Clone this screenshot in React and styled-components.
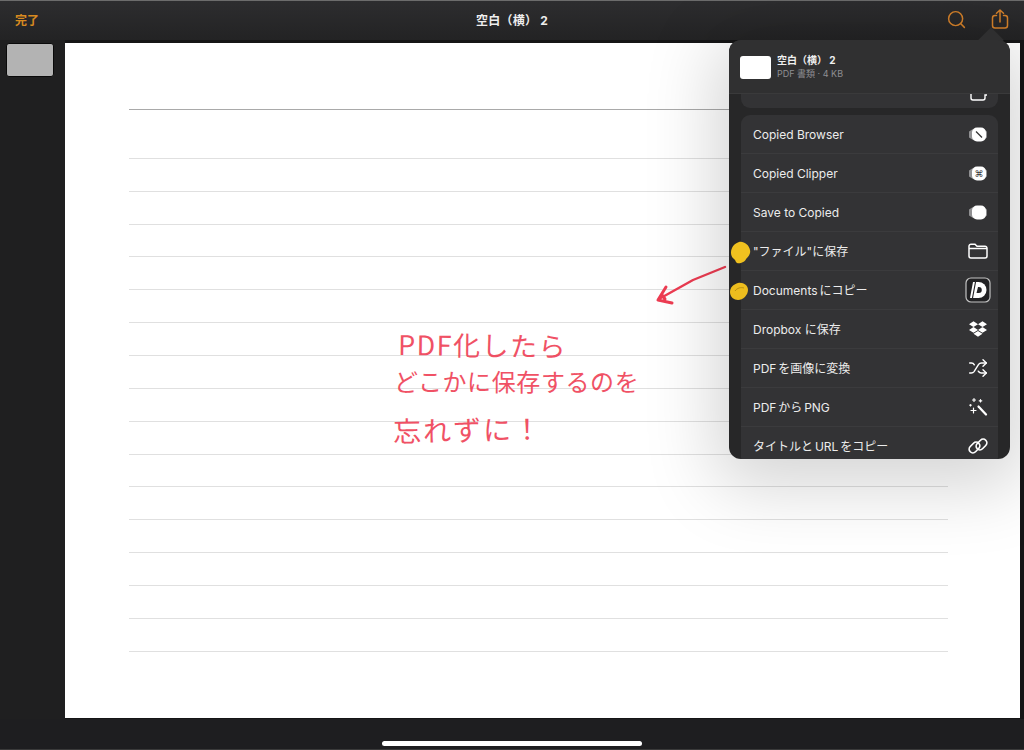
import React from 'react';
import styled, { createGlobalStyle } from 'styled-components';
import { Search, Shuffle } from 'lucide-react';
import { FaDropbox } from 'react-icons/fa';

const GlobalStyle = createGlobalStyle`
  html, body { margin: 0; padding: 0; background: #1e1e20; }
  body { font-family: "Inter", "Noto Sans CJK JP", sans-serif; }
  * { box-sizing: border-box; }
`;

const Screen = styled.div`
  position: relative;
  width: 1024px;
  height: 750px;
  overflow: hidden;
  background: #1e1e20;
  display: flex;
  flex-direction: column;
`;

const TopBar = styled.header`
  height: 40px;
  display: grid;
  grid-template-columns: 1fr auto 1fr;
  align-items: center;
  padding: 0 15px;
  color: #fff;
  border-top: 1px solid #6c6c6c;
  background: linear-gradient(#2d2d2f, #232324);
`;

const DoneButton = styled.span`
  font-size: 12px;
  font-weight: 700;
  color: #d88a20;
  margin-top: -2px;
`;

const Title = styled.span`
  font-size: 12px;
  font-weight: 700;
  color: #eee;
  margin-top: -2px;
  letter-spacing: 0.2px;
`;

const TopActions = styled.div`
  justify-self: end;
  display: flex;
  align-items: center;
  gap: 23px;
  color: #d3802a;
  margin-right: -1px;
  margin-top: -3px;
`;

const Main = styled.main`
  flex: 1;
  display: flex;
  min-height: 0;
  background: #111112;
`;

const Sidebar = styled.aside`
  width: 65px;
  padding: 3px 0 0 6px;
  background: #1f1f20;
`;

const Thumb = styled.div`
  width: 48px;
  height: 34px;
  background: #b3b3b3;
  border-radius: 3px;
  border: 1px solid #0a0a0a;
`;

const SheetArea = styled.div`
  flex: 1;
  padding: 3px 4px 1px 0;
  background: #151516;
  display: flex;
`;

const Sheet = styled.section`
  position: relative;
  flex: 1;
  background: #fff;
  padding: 66px 0 0 64px;
`;

const TopRule = styled.div`
  width: 819px;
  height: 1px;
  background: #a9a9a9;
  margin-bottom: 16px;
`;

const RuleRow = styled.div`
  width: 819px;
  height: 32.86px;
  border-bottom: 1px solid #e0e0e0;
`;

const Note = styled.div`
  position: absolute;
  left: 328px;
  top: 283px;
  color: #ef3f55;
  font-family: "Noto Sans CJK JP", sans-serif;
  font-weight: 400;
  white-space: nowrap;
  opacity: 0.9;
`;

const NoteLine = styled.div`
  font-size: ${p => p.$size}px;
  letter-spacing: ${p => p.$spacing}px;
  line-height: ${p => p.$height}px;
  margin-left: ${p => p.$indent}px;
  transform: rotate(${p => p.$tilt}deg);
  transform-origin: left center;
`;

const NoteArrow = styled.svg`
  position: absolute;
  left: 588px;
  top: 221px;
`;

const BottomBar = styled.footer`
  height: 31px;
  display: flex;
  justify-content: center;
  padding-top: 22px;
  background: #1e1e20;
  border-bottom: 1px solid #3a3a3a;
`;

const HomeIndicator = styled.div`
  width: 260px;
  height: 5px;
  margin-left: -1px;
  border-radius: 3px;
  background: #fff;
`;

const Popover = styled.div`
  position: absolute;
  left: 729px;
  top: 40px;
  width: 281px;
  height: 419px;
  border-radius: 12px;
  background: #272728;
  box-shadow: 0 14px 70px 14px rgba(0, 0, 0, 0.17);
  &::before {
    content: '';
    position: absolute;
    right: 0;
    top: -10px;
    width: 20px;
    height: 20px;
    transform: translateX(-9px) rotate(45deg) scale(0.9);
    background: #2f2f30;
  }
`;

const PopoverClip = styled.div`
  position: relative;
  height: 100%;
  border-radius: 12px;
  overflow: hidden;
  display: flex;
  flex-direction: column;
`;

const FileHeader = styled.div`
  height: 54px;
  flex: none;
  display: flex;
  align-items: center;
  gap: 6px;
  padding: 0 11px;
  background: #303031;
  border-bottom: 1px solid #3a3a3b;
`;

const FileThumb = styled.div`
  width: 31px;
  height: 23px;
  margin-top: 1px;
  border-radius: 3px;
  background: #fff;
`;

const FileText = styled.div`
  display: flex;
  flex-direction: column;
  gap: 2px;
  margin-top: 1px;
`;

const FileName = styled.span`
  font-size: 10px;
  line-height: 12px;
  font-weight: 700;
  color: #f0f0f0;
`;

const FileMeta = styled.span`
  font-size: 9px;
  line-height: 12px;
  color: #8e8e91;
`;

const ActionList = styled.div`
  flex: 1;
  min-height: 0;
  padding: 0 12px;
`;

const ActionGroup = styled.div`
  background: #333335;
  border-radius: 9px;
  margin-bottom: 7px;
`;

const ClippedGroup = styled(ActionGroup)`
  height: 14px;
  border-radius: 0 0 9px 9px;
  display: flex;
  justify-content: flex-end;
  padding-right: 10px;
  color: #fff;
`;

const ActionRow = styled.div`
  height: 39px;
  display: flex;
  align-items: center;
  justify-content: space-between;
  padding: 0 7px 0 12px;
  font-size: 12px;
  color: #ececec;
  border-bottom: 1px solid #3b3b3d;
`;

const ActionLabel = styled.span`
  margin-top: ${p => (p.$latin ? '0' : '-1px')};
  word-spacing: ${p => (p.$tight ? '-1.5px' : '0')};
`;

const ActionIcon = styled.span`
  width: 26px;
  height: 26px;
  display: flex;
  align-items: center;
  justify-content: center;
  color: #fff;
`;

const Marker = styled.svg`
  position: absolute;
  left: ${p => p.$x}px;
  top: ${p => p.$y}px;
`;

const ShareIcon = () => (
  <svg width="20" height="20" viewBox="0 0 20 20" fill="none" stroke="currentColor" strokeWidth="1.500" strokeLinecap="round" strokeLinejoin="round">
    <path d="M6.500 6.500H5a2.500 2.500 0 0 0-2.500 2.500v7.500A2.500 2.500 0 0 0 5 19h10a2.500 2.500 0 0 0 2.500-2.500V9A2.500 2.500 0 0 0 15 6.500h-1.500" />
    <path d="M10 13V1M6.500 4.200 10 1l3.500 3.200" />
  </svg>
);

const CopiedIcon = ({ children }) => (
  <svg width="20" height="15" viewBox="0 0 20 15">
    <path d="M1 4.500 5 2v11l-4-2.500zM19 4.500 16 3v9l3-1.500z" fill="#909092" />
    <rect x="4" y="0.500" width="14" height="14" rx="5" fill="#fff" />
    {children}
  </svg>
);

const FolderIcon = () => (
  <svg width="20" height="16" viewBox="0 0 20 16" fill="none" stroke="#fff" strokeWidth="1.500">
    <path d="M1 3.200A2 2 0 0 1 3 1.200h4l2 2h8a2 2 0 0 1 2 2V13a2 2 0 0 1-2 2H3a2 2 0 0 1-2-2z" />
    <path d="M1 5.400h18" />
  </svg>
);

const DocumentsIcon = () => (
  <svg width="26" height="26" viewBox="0 0 26 26">
    <rect x="1" y="1" width="24" height="24" rx="5" fill="#222224" stroke="#c4c4c4" strokeWidth="1.200" />
    <path d="M8 5h5.500a8 8 0 0 1 0 16H5z" fill="#fff" />
    <path d="M13 10h.8a3 3 0 0 1 0 6H11.500z" fill="#222224" />
    <path d="M10.500 5 7.500 21" stroke="#222224" strokeWidth="1.100" />
  </svg>
);

const WandIcon = () => (
  <svg width="20" height="20" viewBox="0 0 20 20" fill="none" stroke="#fff" strokeLinecap="round">
    <path d="M10.500 9.500 18 17.500" strokeWidth="2.200" />
    <path d="M6 1.500v3M4.500 3h3M12.500 2.500v2.500M11.200 3.800h2.600M2.500 7.500v1.500M1.800 8.200h1.400M5.500 11v5M3 13.500h5" strokeWidth="1.200" />
  </svg>
);

const ChainIcon = () => (
  <svg width="20" height="20" viewBox="0 0 20 20" fill="none" stroke="#fff" strokeWidth="1.700">
    <rect x="0.500" y="7.800" width="12" height="7.400" rx="3.700" transform="rotate(-45 6.500 11.500)" />
    <rect x="7.500" y="4.800" width="12" height="7.400" rx="3.700" transform="rotate(-45 13.500 8.500)" />
  </svg>
);

const ShareStub = () => (
  <svg width="18" height="14" viewBox="0 0 18 14" fill="none" stroke="#fff" strokeWidth="1.400">
    <path d="M1 0v4a2 2 0 0 0 2 2h10a2 2 0 0 0 2-2V1h2" />
  </svg>
);

const actions = [
  { label: 'Copied Browser', latin: true, icon: <CopiedIcon><path d="M8 4.500l6 6" stroke="#333" strokeWidth="1.200" /></CopiedIcon> },
  { label: 'Copied Clipper', latin: true, icon: <CopiedIcon><text x="11" y="11" fontSize="9" textAnchor="middle" fill="#333" fontFamily="DejaVu Sans">⌘</text></CopiedIcon> },
  { label: 'Save to Copied', latin: true, icon: <CopiedIcon /> },
  { label: '"ファイル"に保存', icon: <FolderIcon /> },
  { label: 'Documents にコピー', icon: <DocumentsIcon />, tight: true },
  { label: 'Dropbox に保存', icon: <FaDropbox size={18} /> },
  { label: 'PDF を画像に変換', icon: <Shuffle size={20} strokeWidth={1.700} />, tight: true },
  { label: 'PDF から PNG', icon: <WandIcon />, tight: true },
  { label: 'タイトルと URL をコピー', icon: <ChainIcon />, tight: true },
];

const rules = Array.from({ length: 16 }, (_, i) => i);

const App = () => (
  <Screen>
    <GlobalStyle />
    <TopBar>
      <DoneButton>完了</DoneButton>
      <Title>空白（横） 2</Title>
      <TopActions>
        <Search size={21} strokeWidth={1.700} />
        <ShareIcon />
      </TopActions>
    </TopBar>
    <Main>
      <Sidebar>
        <Thumb />
      </Sidebar>
      <SheetArea>
        <Sheet>
          <TopRule />
          {rules.map(i => <RuleRow key={i} />)}
          <Note>
            <NoteLine $size={27} $spacing={1.500} $height={36} $indent={5} $tilt={0.600}>PDF化したら</NoteLine>
            <NoteLine $size={24} $spacing={0.600} $height={38} $indent={1} $tilt={0}>どこかに保存するのを</NoteLine>
            <NoteLine $size={28} $spacing={2} $height={60} $indent={0} $tilt={-1}>忘れずに！</NoteLine>
          </Note>
          <NoteArrow width="76" height="46" viewBox="0 0 76 46" fill="none" stroke="#ee3c52" strokeLinecap="round" strokeLinejoin="round">
            <path d="M72 3 L40 16 L6 35" strokeWidth="2.400" />
            <path d="M13 23 5 36l14 3 M9 31l3 4" strokeWidth="3" />
          </NoteArrow>
        </Sheet>
      </SheetArea>
    </Main>
    <BottomBar>
      <HomeIndicator />
    </BottomBar>
    <Popover>
      <PopoverClip>
        <FileHeader>
          <FileThumb />
          <FileText>
            <FileName>空白（横） 2</FileName>
            <FileMeta>PDF 書類 · 4 KB</FileMeta>
          </FileText>
        </FileHeader>
        <ActionList>
          <ClippedGroup>
            <ShareStub />
          </ClippedGroup>
          <ActionGroup>
            {actions.map(action => (
              <ActionRow key={action.label}>
                <ActionLabel $tight={action.tight} $latin={action.latin}>{action.label}</ActionLabel>
                <ActionIcon>{action.icon}</ActionIcon>
              </ActionRow>
            ))}
          </ActionGroup>
        </ActionList>
      </PopoverClip>
    </Popover>
    <Marker $x={730} $y={241} width="21" height="24" viewBox="0 0 21 24">
      <path d="M9 1c5-1 10 3 11 8 1 4-2 7-4 9-1 3-6 5-9 4-2-1-1-3-3-4C1 16 0 11 2 7c1-3 4-5 7-6z" fill="#f0c11f" />
    </Marker>
    <Marker $x={729} $y={282} width="20" height="19" viewBox="0 0 20 19">
      <path d="M9 1c5-1 10 2 10 7 0 5-5 10-10 10C5 18 1 15 1 10 1 5 5 2 9 1z" fill="#edbd1e" />
      <path d="M6 9c2-3 6-4 9-3" stroke="#b98f12" strokeWidth="1" fill="none" />
    </Marker>
  </Screen>
);

export default App;
